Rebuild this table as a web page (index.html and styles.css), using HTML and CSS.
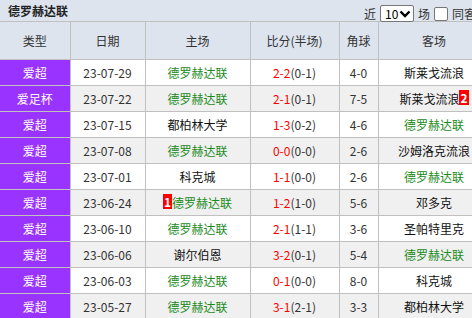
FILE: index.html
```html
<!DOCTYPE html>
<html>
<head>
<meta charset="utf-8">
<link rel="stylesheet" href="styles.css">
</head>
<body>
<div class="wrap">
  <div class="bar">
    <span class="title">德罗赫达联</span>
    <div class="tools">
      <span>近</span>
      <span class="sel">10<svg width="12" height="8" viewBox="0 0 12 8"><path d="M1.5 1.5 L6 6 L10.5 1.5" fill="none" stroke="#000" stroke-width="2.4"/></svg></span>
      <span>场</span>
      <span class="chk"></span>
      <span>同客场</span>
    </div>
  </div>
  <table class="tbl">
    <colgroup>
      <col class="c1"><col class="c2"><col class="c3"><col class="c4"><col class="c5"><col class="c6">
    </colgroup>
    <thead>
      <tr><th>类型</th><th>日期</th><th>主场</th><th>比分(半场)</th><th>角球</th><th>客场</th></tr>
    </thead>
    <tbody>
      <tr><td class="type">爱超</td><td>23-07-29</td><td class="g">德罗赫达联</td><td><span class="r">2-2</span>(0-1)</td><td>4-0</td><td>斯莱戈流浪</td></tr>
      <tr class="alt"><td class="type">爱足杯</td><td>23-07-22</td><td class="g">德罗赫达联</td><td><span class="r">2-1</span>(0-1)</td><td>7-5</td><td>斯莱戈流浪<span class="badge">2</span></td></tr>
      <tr><td class="type">爱超</td><td>23-07-15</td><td>都柏林大学</td><td><span class="r">1-3</span>(0-2)</td><td>4-6</td><td class="g">德罗赫达联</td></tr>
      <tr class="alt"><td class="type">爱超</td><td>23-07-08</td><td class="g">德罗赫达联</td><td><span class="r">0-0</span>(0-0)</td><td>2-6</td><td>沙姆洛克流浪</td></tr>
      <tr><td class="type">爱超</td><td>23-07-01</td><td>科克城</td><td><span class="r">1-1</span>(0-0)</td><td>2-6</td><td class="g">德罗赫达联</td></tr>
      <tr class="alt"><td class="type">爱超</td><td>23-06-24</td><td class="g"><span class="badge">1</span>德罗赫达联</td><td><span class="r">1-2</span>(1-0)</td><td>5-6</td><td>邓多克</td></tr>
      <tr><td class="type">爱超</td><td>23-06-10</td><td class="g">德罗赫达联</td><td><span class="r">2-1</span>(1-1)</td><td>3-6</td><td>圣帕特里克</td></tr>
      <tr class="alt"><td class="type">爱超</td><td>23-06-06</td><td>谢尔伯恩</td><td><span class="r">3-2</span>(0-1)</td><td>5-4</td><td class="g">德罗赫达联</td></tr>
      <tr><td class="type">爱超</td><td>23-06-03</td><td class="g">德罗赫达联</td><td><span class="r">0-1</span>(0-0)</td><td>8-0</td><td>科克城</td></tr>
      <tr class="alt"><td class="type">爱超</td><td>23-05-27</td><td class="g">德罗赫达联</td><td><span class="r">3-1</span>(2-1)</td><td>3-3</td><td>都柏林大学</td></tr>
    </tbody>
  </table>
</div>
</body>
</html>
```
FILE: styles.css
```css
html, body {
  margin: 0;
  padding: 0;
  overflow: hidden;
  background: #fff;
}
body {
  font-family: "Noto Sans CJK SC", "Microsoft YaHei", sans-serif;
  font-size: 12px;
  color: #333;
}
.wrap {
  width: 490px;
}
.bar {
  height: 21px;
  background: #dde4ee;
  display: flex;
  align-items: center;
  justify-content: space-between;
  padding-left: 8px;
  box-sizing: border-box;
}
.title {
  font-weight: bold;
  color: #222;
  font-size: 12px;
  line-height: 21px;
}
.tools {
  display: flex;
  align-items: center;
  gap: 4px;
  padding-top: 6px;
  color: #333;
  width: 126px;
  white-space: nowrap;
  overflow: hidden;
  flex-shrink: 0;
}
.sel {
  display: inline-flex;
  align-items: center;
  justify-content: space-between;
  box-sizing: border-box;
  width: 34px;
  height: 17px;
  border: 1px solid #767676;
  border-radius: 2px;
  background: #fff;
  color: #000;
  padding: 0 2px 0 4px;
  font-size: 12px;
}
.chk {
  display: inline-block;
  width: 12px;
  height: 12px;
  border: 1px solid #767676;
  border-radius: 2px;
  background: #fff;
}
.tbl {
  border-collapse: collapse;
  table-layout: fixed;
  width: 490px;
  border-top: 1px solid #c0c0c0;
}
.c1 { width: 70px; }
.c2 { width: 75px; }
.c3 { width: 105px; }
.c4 { width: 89px; }
.c5 { width: 39px; }
.c6 { width: 112px; }
.tbl th, .tbl td {
  border: 1px solid #c0c0c0;
  text-align: center;
  padding: 0;
  white-space: nowrap;
  overflow: hidden;
}
.tbl th {
  height: 37px;
  background: #dde4ee;
  font-weight: normal;
  color: #333;
}
.tbl td {
  height: 25px;
  background: #fff;
  color: #333;
}
.tbl tr.alt td {
  background: #f0f0f0;
}
.tbl td.type, .tbl tr.alt td.type {
  background: #9933ff;
  color: #fff;
}
.tbl td:first-child, .tbl th:first-child {
  border-left: none;
}
.g {
  color: #1a8a1a !important;
}
.tbl td:nth-child(6) {
  color: #111;
}
.tbl td:nth-child(3) {
  color: #111;
}
.r {
  color: #f00;
}
.badge {
  display: inline-block;
  background: #f00;
  color: #fff;
  font-weight: bold;
  padding: 0 1px;
  line-height: 15px;
  vertical-align: 1px;
}
```
